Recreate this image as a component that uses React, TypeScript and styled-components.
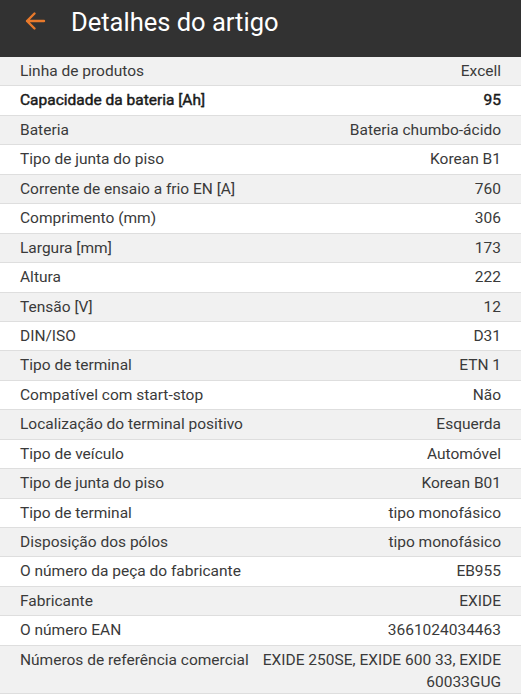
import React from "react";
import styled, { createGlobalStyle } from "styled-components";

const Global = createGlobalStyle`
  html, body { margin: 0; padding: 0; background: #ffffff; }
  body { font-family: Roboto, "Noto Sans", Arial, sans-serif; }
`;

const Page = styled.div`
  width: 521px;
  min-height: 700px;
  background: #ffffff;
`;

const Header = styled.header`
  height: 57px;
  background: #323232;
  display: flex;
  align-items: center;
  padding: 0 0 0 24px;
  box-sizing: border-box;
  gap: 25px;
`;

const Back = styled.button`
  border: 0;
  background: transparent;
  padding: 0;
  width: 22px;
  height: 22px;
  display: flex;
  align-items: center;
  justify-content: center;
  margin-top: -15px;
`;

const Title = styled.h1`
  margin: 0 0 14px 0;
  color: #ffffff;
  font-family: Roboto, Arial, sans-serif;
  font-weight: 400;
  font-size: 25.5px;
`;

const List = styled.div`
  display: flex;
  flex-direction: column;
`;

const Row = styled.div<{ $alt: boolean; $bold?: boolean }>`
  display: flex;
  align-items: flex-start;
  justify-content: space-between;
  gap: 12px;
  box-sizing: border-box;
  min-height: 29.45px;
  padding: 3px 20px 0;
  border-bottom: 1px solid #dedede;
  background: ${(p) => (p.$alt ? "#f1f1f1" : "#ffffff")};
  font-size: 15.5px;
  line-height: 22px;
  color: ${(p) => (p.$bold ? "#1a1a1a" : "#3a3a3a")};
  -webkit-text-stroke: ${(p) => (p.$bold ? "0.45px #1a1a1a" : "0")};
`;

const Label = styled.span`
  white-space: nowrap;
  flex: none;
`;

const Value = styled.span`
  text-align: right;
`;

const rows: [string, string, boolean?][] = [
  ["Linha de produtos", "Excell"],
  ["Capacidade da bateria [Ah]", "95", true],
  ["Bateria", "Bateria chumbo-ácido"],
  ["Tipo de junta do piso", "Korean B1"],
  ["Corrente de ensaio a frio EN [A]", "760"],
  ["Comprimento (mm)", "306"],
  ["Largura [mm]", "173"],
  ["Altura", "222"],
  ["Tensão [V]", "12"],
  ["DIN/ISO", "D31"],
  ["Tipo de terminal", "ETN 1"],
  ["Compatível com start-stop", "Não"],
  ["Localização do terminal positivo", "Esquerda"],
  ["Tipo de veículo", "Automóvel"],
  ["Tipo de junta do piso", "Korean B01"],
  ["Tipo de terminal", "tipo monofásico"],
  ["Disposição dos pólos", "tipo monofásico"],
  ["O número da peça do fabricante", "EB955"],
  ["Fabricante", "EXIDE"],
  ["O número EAN", "3661024034463"],
  ["Números de referência comercial", "EXIDE 250SE, EXIDE 600 33, EXIDE 60033GUG"],
];

export default function App() {
  return (
    <Page>
      <Global />
      <Header>
        <Back aria-label="Voltar">
          <svg width="22" height="22" viewBox="0 0 22 22" fill="none">
            <path d="M20 11H3M10.5 3.5L3 11l7.5 7.5" stroke="#e8792b" strokeWidth="2.4" strokeLinecap="round" strokeLinejoin="round" />
          </svg>
        </Back>
        <Title>Detalhes do artigo</Title>
      </Header>
      <List>
        {rows.map(([l, v, b], i) => (
          <Row key={i} $alt={i % 2 === 0} $bold={!!b}>
            <Label>{l}</Label>
            <Value>{v}</Value>
          </Row>
        ))}
      </List>
    </Page>
  );
}
